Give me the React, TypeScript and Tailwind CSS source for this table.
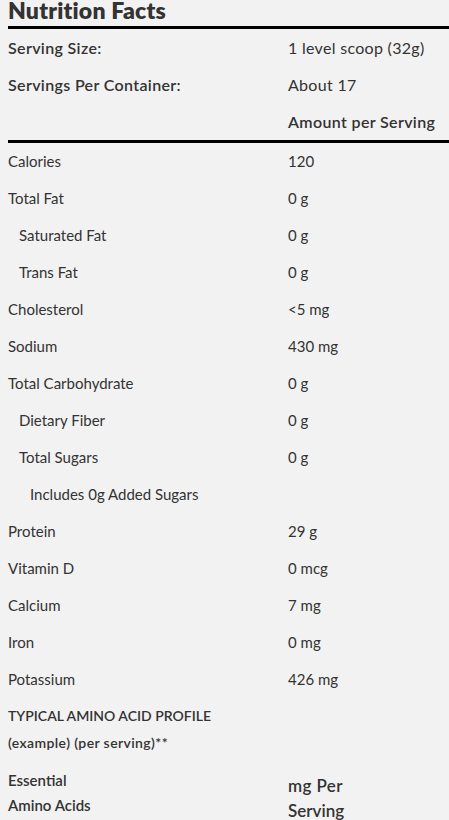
const rows: { label: string; value: string; indent?: number }[] = [
  { label: "Calories", value: "120" },
  { label: "Total Fat", value: "0 g" },
  { label: "Saturated Fat", value: "0 g", indent: 1 },
  { label: "Trans Fat", value: "0 g", indent: 1 },
  { label: "Cholesterol", value: "<5 mg" },
  { label: "Sodium", value: "430 mg" },
  { label: "Total Carbohydrate", value: "0 g" },
  { label: "Dietary Fiber", value: "0 g", indent: 1 },
  { label: "Total Sugars", value: "0 g", indent: 1 },
  { label: "Includes 0g Added Sugars", value: "", indent: 2 },
  { label: "Protein", value: "29 g" },
  { label: "Vitamin D", value: "0 mcg" },
  { label: "Calcium", value: "7 mg" },
  { label: "Iron", value: "0 mg" },
  { label: "Potassium", value: "426 mg" },
];

export default function App() {
  return (
    <main className="h-[820px] overflow-hidden bg-[#f2f2f2] pl-2 font-['Lato',sans-serif] text-[#333]">
      <h1 className="-mt-[4px] h-[30px] text-[23px] font-extrabold leading-[28px] tracking-[0.2px] text-[#333]">
        Nutrition Facts
      </h1>
      <div className="border-t-[3px] border-black" />

      <div className="grid grid-cols-[280px_1fr] text-[16px]">
        <div className="flex h-[37px] items-center font-semibold tracking-[0.35px]">Serving Size:</div>
        <div className="flex h-[37px] items-center tracking-[0.3px]">1 level scoop (32g)</div>
        <div className="flex h-[37px] items-center font-semibold tracking-[0.35px]">Servings Per Container:</div>
        <div className="flex h-[37px] items-center tracking-[0.3px]">About 17</div>
        <div className="h-[37px]" />
        <div className="flex h-[37px] items-center font-semibold tracking-[0.35px]">Amount per Serving</div>
      </div>
      <div className="border-t-[3px] border-black" />

      <div className="grid grid-cols-[280px_1fr] text-[15px]">
        {rows.map((r) => (
          <div key={r.label} className="contents">
            <div
              className={
                "flex h-[37px] items-center whitespace-nowrap pb-px " +
                (r.indent === 2 ? "pl-[22px]" : r.indent === 1 ? "pl-[11px]" : "")
              }
            >
              {r.label}
            </div>
            <div className="flex h-[37px] items-center pb-px">{r.value}</div>
          </div>
        ))}
      </div>

      <div className="pt-[4px] text-[14px] font-semibold leading-[27px]">
        <p>TYPICAL AMINO ACID PROFILE</p>
        <p className="tracking-[0.4px]">(example) (per serving)**</p>
      </div>

      <div className="mt-[12px] grid grid-cols-[280px_1fr] font-semibold">
        <div className="text-[15px] leading-[25px]">
          <p>Essential</p>
          <p>Amino Acids</p>
        </div>
        <div className="pt-[5px] text-[17px] leading-[25px]">
          <p className="tracking-[0.4px]">mg Per</p>
          <p>Serving</p>
        </div>
      </div>
    </main>
  );
}
